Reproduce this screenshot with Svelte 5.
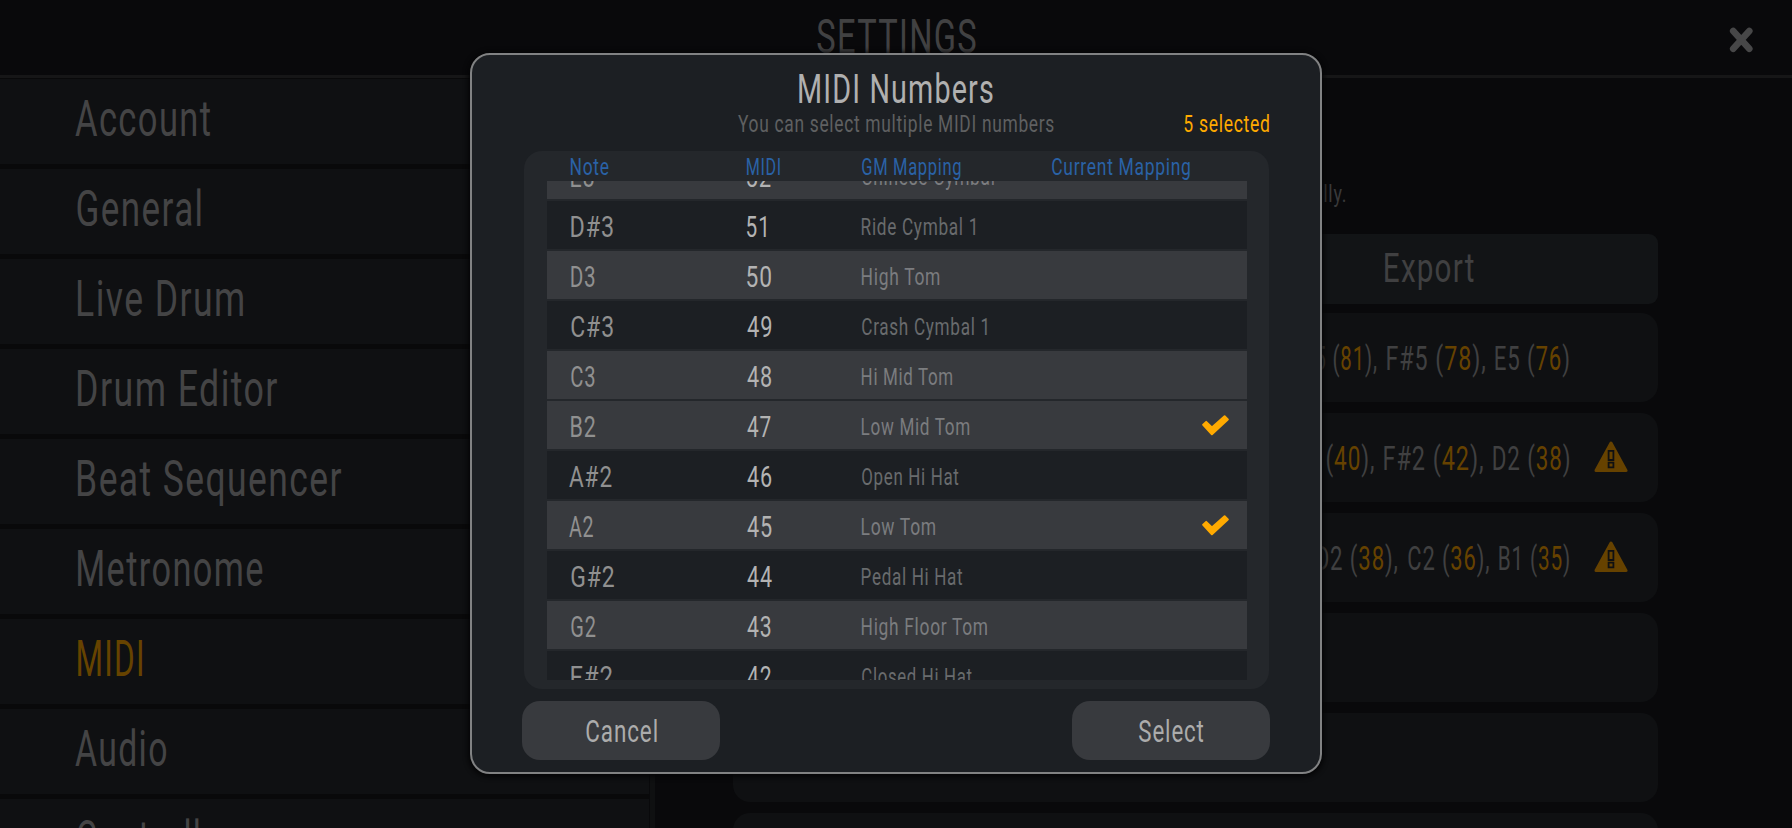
<script>
  const menu = [
    ['Account', 135.3, -2],
    ['General', 124, 0],
    ['Live Drum', 165, 0.5],
    ['Drum Editor', 199, 0.5],
    ['Beat Sequencer', 263, 0.3],
    ['Metronome', 184.7, 0.5],
    ['MIDI', 64.5, 0.5],
    ['Audio', 91, -2],
    ['Controller', 155, 0]
  ];

  const rows = [
    { note: 'E3', nw: 23, midi: '52', mw: 23.5, gm: 'Chinese Cymbal', gw: 132.3 },
    { note: 'D#3', nw: 42.3, midi: '51', mw: 18.7, gm: 'Ride Cymbal 1', gw: 113 },
    { note: 'D3', nw: 24, midi: '50', mw: 24.3, gm: 'High Tom', gw: 77.6 },
    { note: 'C#3', nw: 42.3, midi: '49', mw: 24, gm: 'Crash Cymbal 1', gw: 124.8 },
    { note: 'C3', nw: 24, midi: '48', mw: 24.5, gm: 'Hi Mid Tom', gw: 90.5 },
    { note: 'B2', nw: 24.2, midi: '47', mw: 23.5, gm: 'Low Mid Tom', gw: 107.5, on: true },
    { note: 'A#2', nw: 42.3, midi: '46', mw: 24.5, gm: 'Open Hi Hat', gw: 96.8 },
    { note: 'A2', nw: 24, midi: '45', mw: 24.5, gm: 'Low Tom', gw: 73.4, on: true },
    { note: 'G#2', nw: 43, midi: '44', mw: 25, gm: 'Pedal Hi Hat', gw: 100.6 },
    { note: 'G2', nw: 24.3, midi: '43', mw: 24, gm: 'High Floor Tom', gw: 125.3 },
    { note: 'F#2', nw: 41.3, midi: '42', mw: 24, gm: 'Closed Hi Hat', gw: 110 }
  ];

  // Each entry: note, MIDI number, closing characters, inked width.
  const mappings = [
    { notes: [['A5', '81', '),', 76.2], ['F#5', '78', '),', 97.8], ['E5', '76', ')', 74]] },
    { notes: [['E2', '40', '),', 80.5], ['F#2', '42', '),', 98.6], ['D2', '38', ')', 76.5]], warn: true },
    { notes: [['D2', '38', '),', 81], ['C2', '36', '),', 80.6], ['B1', '35', ')', 70.3]], warn: true },
    { notes: [] },
    { notes: [] },
    { notes: [] }
  ];

  const ctx = document.createElement('canvas').getContext('2d');

  // Condenses a line of text so that its inked width equals `w`.
  function fit(node, { w, cap }) {
    const size = cap / 0.711;
    ctx.font = `400 ${size}px Roboto`;
    ctx.letterSpacing = `${size * 0.04}px`;
    const m = ctx.measureText(node.textContent);
    const left = -m.actualBoundingBoxLeft;
    const s = w / (m.actualBoundingBoxRight - left);
    node.setAttribute('transform', `matrix(${s} 0 0 1 ${-left * s} ${cap})`);
    node.setAttribute('font-size', size);
    node.setAttribute('letter-spacing', size * 0.04);
  }
</script>

{#snippet label(text, w, cap)}
  <svg class="label" width={w} height={cap}><text use:fit={{ w, cap }}>{text}</text></svg>
{/snippet}

<div class="screen">
  <header>
    <span></span>
    <div class="title">{@render label('SETTINGS', 159, 34.7)}</div>
    <svg class="close" width="25" height="26" viewBox="0 0 25 26">
      <path d="M4.2 4 L20.3 21.8 M20.3 4 L4.2 21.8" />
    </svg>
  </header>

  <div class="body">
    <nav>
      {#each menu as [name, w, shift]}
        <div class="item" class:active={name === 'MIDI'}>
          <div style:margin-left="{shift}px">{@render label(name, w, 35)}</div>
          {#if name === 'Controller'}
            <svg width="14" height="22" viewBox="0 0 14 22"><path class="chev" d="M3 3 L11 11 L3 19" /></svg>
          {/if}
        </div>
      {/each}
    </nav>
    <div class="rail"></div>
    <main>
      <div class="hint">{@render label('lly.', 21.4, 17.5)}</div>
      <div class="actions">
        <div class="action"></div>
        <div class="action">{@render label('Export', 89, 29.3)}</div>
      </div>
      <div class="cards">
        {#each mappings as m}
          <div class="card">
            <div class="notes">
              {#each m.notes as [note, num, end, w]}
                <svg class="label" width={w} height="23.3">
                  <text use:fit={{ w, cap: 23.3 }}><tspan>{note + ' ('}</tspan><tspan class="num">{num}</tspan><tspan>{end}</tspan></text>
                </svg>
              {/each}
            </div>
            <div class="slot">
              {#if m.warn}
                <svg width="34" height="32" viewBox="0 0 34 32">
                  <path d="M17 2 L32 29.5 H2 Z" fill="#664200" stroke="#664200" stroke-width="3" stroke-linejoin="round" />
                  <path d="M14.6 9.8 H19.4 V19 H14.6 Z M14.6 21.6 H19.4 V26.4 H14.6 Z" fill="none" stroke="#0f1012" stroke-width="1.8" />
                </svg>
              {/if}
            </div>
          </div>
        {/each}
      </div>
    </main>
  </div>

  <section class="modal">
    <h1>{@render label('MIDI Numbers', 194, 29.3)}</h1>
    <div class="sub">
      <span></span>
      <div class="subtitle">{@render label('You can select multiple MIDI numbers', 316, 17.5)}</div>
      <div class="count">{@render label('5 selected', 85.4, 17.5)}</div>
    </div>
    <div class="panel">
      <div class="grid head">
        {@render label('Note', 38, 17.5)}
        {@render label('MIDI', 33, 17.5)}
        {@render label('GM Mapping', 99, 17.5)}
        {@render label('Current Mapping', 138.4, 17.5)}
      </div>
      <div class="list">
        <div class="rows">
          {#each rows as r}
            <div class="grid row" class:sharp={r.note.includes('#')}>
              <div class="note" class:wide={r.note.startsWith('A')}>{@render label(r.note, r.nw, 21.5)}</div>
              <div class="midi">{@render label(r.midi, r.mw, 21.5)}</div>
              <div class="gm">{@render label(r.gm, r.gw, 17.5)}</div>
              <div class="mark">
                {#if r.on}
                  <svg width="27" height="21" viewBox="0 0 27 21">
                    <path d="M1.2 9.8 L4.2 6.9 L9.9 12.4 L22.6 1.2 L25.8 4.4 L9.9 19.3 Z" fill="#ffaa00" stroke="#ffaa00" stroke-width="2" stroke-linejoin="round" />
                  </svg>
                {/if}
              </div>
            </div>
          {/each}
        </div>
      </div>
    </div>
    <footer>
      <div class="btn">{@render label('Cancel', 71, 22.3)}</div>
      <div class="btn">{@render label('Select', 64.7, 22.3)}</div>
    </footer>
  </section>
</div>

<style>
  :global(body) {
    background: #09090b;
    overflow: hidden;
  }
  .screen {
    position: relative;
    width: 1792px;
    height: 828px;
    overflow: hidden;
    background: #09090b;
    color: #444445;
    font-family: Roboto, sans-serif;
  }
  svg {
    display: block;
    flex: none;
  }
  .label {
    overflow: visible;
    fill: currentColor;
  }
  .label text {
    white-space: pre;
  }
  header {
    box-sizing: border-box;
    height: 78px;
    display: grid;
    grid-template-columns: 1fr auto 1fr;
    border-bottom: 3px solid #161617;
  }
  .title {
    padding-top: 18.3px;
    color: #414142;
  }
  .close {
    justify-self: end;
    margin: 27px 38px 0 0;
    fill: none;
    stroke: #474748;
    stroke-width: 6.6;
    stroke-linecap: round;
  }
  .body {
    display: flex;
    height: 750px;
  }
  nav {
    width: 649px;
    display: flex;
    flex-direction: column;
    gap: 5px;
    padding-top: 1px;
    background: #09090a;
  }
  .item {
    box-sizing: border-box;
    flex: none;
    height: 85px;
    display: flex;
    align-items: center;
    justify-content: space-between;
    padding: 0 36px 6.6px 77.3px;
    background: #0f1012;
  }
  .active {
    color: #664300;
  }
  .chev {
    fill: none;
    stroke: #555556;
    stroke-width: 4;
    stroke-linecap: round;
    stroke-linejoin: round;
  }
  .rail {
    width: 5px;
    margin-left: 1px;
    background: #0f1011;
  }
  main {
    width: 925px;
    margin-left: 78px;
  }
  .hint {
    display: flex;
    justify-content: flex-end;
    padding: 106px 313px 0 0;
    color: #39393a;
  }
  .actions {
    display: grid;
    grid-template-columns: 1fr 1fr;
    gap: 10px;
    margin-top: 32.5px;
  }
  .action {
    box-sizing: border-box;
    height: 70px;
    display: flex;
    align-items: center;
    justify-content: center;
    padding-bottom: 2px;
    border-radius: 9px;
    background: #121416;
    color: #404041;
  }
  .cards {
    display: flex;
    flex-direction: column;
    gap: 11px;
    margin-top: 9px;
  }
  .card {
    box-sizing: border-box;
    flex: none;
    height: 89px;
    display: flex;
    align-items: center;
    justify-content: flex-end;
    gap: 25px;
    padding: 3px 30px 0 0;
    border-radius: 17px;
    background: #0f1012;
    color: #404041;
  }
  .notes {
    display: flex;
    gap: 10.4px;
  }
  .num {
    fill: #664200;
  }
  .slot {
    width: 34px;
    padding-bottom: 5px;
  }

  .modal {
    position: absolute;
    left: 470px;
    top: 53px;
    box-sizing: border-box;
    width: 852px;
    height: 721px;
    border: 2px solid #818283;
    border-radius: 20px;
    background: #1c1f23;
    box-shadow: 0 1px 5px 2px #050506;
    display: flex;
    flex-direction: column;
  }
  h1 {
    margin: 18.5px 0 0;
    display: flex;
    justify-content: center;
    font-weight: 400;
    color: #b0b0b0;
  }
  .sub {
    display: grid;
    grid-template-columns: 1fr auto 1fr;
    margin: 11.5px 51px 0;
  }
  .subtitle {
    color: #5f6061;
  }
  .count {
    justify-self: end;
    color: #ffaa00;
  }
  .panel {
    box-sizing: border-box;
    width: 745px;
    height: 538px;
    margin: 19.2px 0 0 52px;
    padding: 6.2px 22px 9px 23px;
    border-radius: 18px;
    background: #24272b;
    display: flex;
    flex-direction: column;
  }
  .grid {
    display: grid;
    grid-template-columns: 176.2px 115px 190.6px 1fr;
    padding-left: 23.5px;
  }
  .head {
    color: #2a62a6;
    height: 23.8px;
  }
  .list {
    height: 499px;
    overflow: hidden;
  }
  .rows {
    display: flex;
    flex-direction: column;
    gap: 2px;
    margin-top: -30px;
  }
  .row {
    box-sizing: border-box;
    flex: none;
    height: 48px;
    align-items: center;
    padding-top: 2px;
    background: #383a3e;
  }
  .row.sharp {
    background: #1c1f23;
  }
  .note {
    color: #909090;
  }
  .wide {
    margin-left: -1.2px;
  }
  .midi {
    padding-left: 0.8px;
    color: #b3b3b3;
  }
  .gm {
    color: rgba(255, 255, 255, 0.34);
  }
  .mark {
    justify-self: end;
    padding: 0 18px 1px 0;
  }
  footer {
    display: flex;
    justify-content: space-between;
    margin: 12px 50px 0;
  }
  .btn {
    box-sizing: border-box;
    width: 198px;
    height: 59px;
    display: flex;
    align-items: center;
    justify-content: center;
    padding-top: 1px;
    border-radius: 18px;
    background: #383a3e;
    color: #acacac;
  }
</style>
